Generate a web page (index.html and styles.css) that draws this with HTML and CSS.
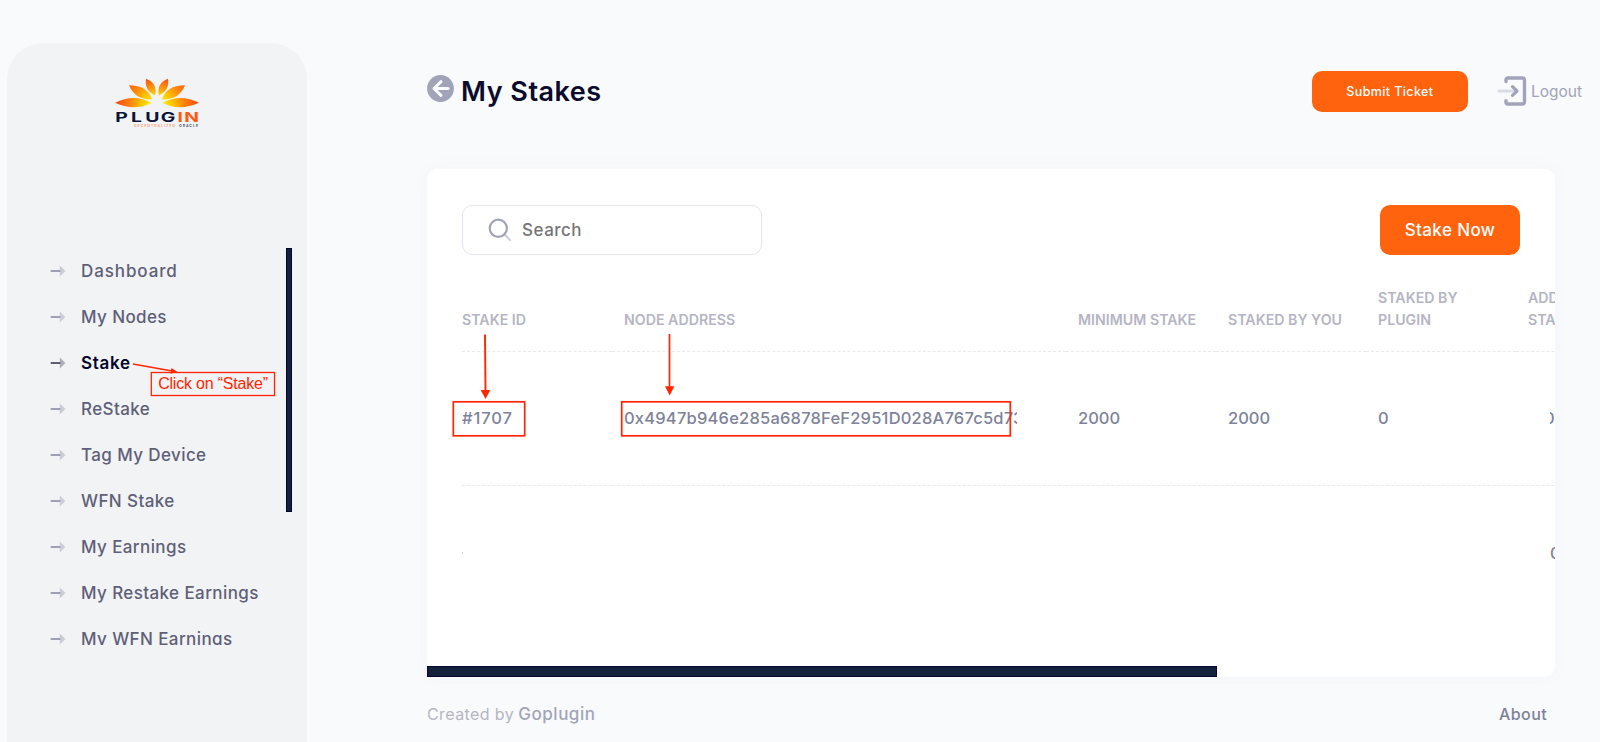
FILE: index.html
```html
<!DOCTYPE html>
<html lang="en">

<head>
    <meta charset="UTF-8">
    <meta name="viewport" content="width=device-width, initial-scale=1.0">
    <title>My Stakes</title>
    <link rel="stylesheet" href="styles.css">
</head>

<body>

    <!-- icons used more than once -->
    <svg width="0" height="0" class="defs">
        <symbol id="arrow" viewBox="0 0 16 12">
            <rect x="0.5" y="5.3" width="10" height="1.5" rx="0.7" fill="currentColor" />
            <path d="M9.8 0.5 L15.4 6 L9.8 11.5 Z" fill="currentColor" opacity="0.35" />
        </symbol>
    </svg>

    <aside class="sidebar">
        <svg class="logo" width="86" height="52" viewBox="0 0 86 52">
            <defs>
                <radialGradient id="flame" gradientUnits="userSpaceOnUse" cx="43" cy="30" r="40">
                    <stop offset="0.15" stop-color="#fff200" />
                    <stop offset="0.4" stop-color="#ffc400" />
                    <stop offset="0.7" stop-color="#fb8010" />
                    <stop offset="1" stop-color="#f9500f" />
                </radialGradient>
                <radialGradient id="flame-top" gradientUnits="userSpaceOnUse" cx="43" cy="30" r="29">
                    <stop offset="0.3" stop-color="#fff200" />
                    <stop offset="0.6" stop-color="#ffa80a" />
                    <stop offset="1" stop-color="#f9560f" />
                </radialGradient>
            </defs>
            <g fill="url(#flame)">
                <path d="M1 25.7 Q20 16 37.5 26 Q20 34.5 1 25.7 Z" />
                <path d="M15 8.3 Q34 8.5 38 22.5 Q21 23 15 8.3 Z" />
                <path d="M85 25.7 Q66 16 48.5 26 Q66 34.5 85 25.7 Z" />
                <path d="M71 8.3 Q52 8.5 48 22.5 Q65 23 71 8.3 Z" />
            </g>
            <g fill="url(#flame-top)">
                <path d="M32 1.8 Q44 6.5 41 18.5 Q30 13 32 1.8 Z" />
                <path d="M54 1.8 Q42 6.5 45 18.5 Q56 13 54 1.8 Z" />
            </g>
            <g class="logo-name" transform="scale(1.55 1)">
                <text x="0.8 11 20.2 30.2" y="45" fill="#0b1436">PLUG</text>
                <text x="41 45.3" y="45" fill="#ff5a12">IN</text>
            </g>
            <text class="logo-tag" x="20" y="50" textLength="41" fill="#f59a78">DECENTRALIZED</text>
            <text class="logo-tag" x="65" y="50" textLength="19" fill="#3c4360">ORACLE</text>
        </svg>

        <div class="menu-wrap">
            <nav class="menu">
                <a class="menu-link"><svg><use href="#arrow" /></svg><span>Dashboard</span></a>
                <a class="menu-link"><svg><use href="#arrow" /></svg><span>My Nodes</span></a>
                <a class="menu-link active"><svg><use href="#arrow" /></svg><span>Stake</span></a>
                <a class="menu-link"><svg><use href="#arrow" /></svg><span>ReStake</span></a>
                <a class="menu-link"><svg><use href="#arrow" /></svg><span>Tag My Device</span></a>
                <a class="menu-link"><svg><use href="#arrow" /></svg><span>WFN Stake</span></a>
                <a class="menu-link"><svg><use href="#arrow" /></svg><span>My Earnings</span></a>
                <a class="menu-link"><svg><use href="#arrow" /></svg><span>My Restake Earnings</span></a>
                <a class="menu-link"><svg><use href="#arrow" /></svg><span>My WFN Earnings</span></a>
            </nav>
            <div class="menu-scroll"></div>
        </div>
    </aside>

    <main class="main">

        <header class="topbar">
            <svg class="back" width="27" height="27" viewBox="0 0 27 27">
                <circle cx="13.5" cy="13.5" r="13.4" fill="#a1a3b9" />
                <path d="M14 6.7 L7 13.5 L14 20.3 M7.5 13.5 H21" fill="none" stroke="#fafbfd" stroke-width="3" stroke-linecap="round" stroke-linejoin="round" />
            </svg>
            <h1 class="title">My Stakes</h1>
            <button class="btn btn-ticket">Submit Ticket</button>
            <a class="logout">
                <svg width="30" height="30" viewBox="0 0 30 30" fill="none" stroke="#a1a3b9" stroke-linecap="round">
                    <path d="M2 15 H17" stroke-width="3" opacity="0.35" />
                    <path d="M15.5 10.7 L20 15 L15.5 19.3" stroke-width="3.2" stroke-linejoin="round" />
                    <path d="M9 5.5 V4 Q9 2 11 2 H25.5 Q27.5 2 27.5 4 V26 Q27.5 28 25.5 28 H11 Q9 28 9 26 V24.8" stroke-width="3.4" />
                </svg>
                <span>Logout</span>
            </a>
        </header>

        <section class="card">
            <div class="toolbar">
                <div class="search">
                    <svg width="24" height="24" viewBox="0 0 24 24" fill="none" stroke="#a1a5b7" stroke-linecap="round">
                        <path d="M17.5 17.5 L22 22" stroke-width="2.4" opacity="0.5" />
                        <circle cx="10.3" cy="10.3" r="8.6" stroke-width="2.2" />
                    </svg>
                    <span>Search</span>
                </div>
                <button class="btn btn-stake">Stake Now</button>
            </div>

            <table class="stakes">
                <colgroup>
                    <col class="col-id">
                    <col class="col-address">
                    <col class="col-num">
                    <col class="col-num">
                    <col class="col-num">
                    <col class="col-num">
                </colgroup>
                <tr>
                    <th>STAKE ID</th>
                    <th>NODE ADDRESS</th>
                    <th>MINIMUM STAKE</th>
                    <th>STAKED BY YOU</th>
                    <th>STAKED BY<br>PLUGIN</th>
                    <th>ADD<br>STAKE</th>
                </tr>
                <tr>
                    <td class="stake-id">#1707</td>
                    <td><div class="address">0x4947b946e285a6878FeF2951D028A767c5d73</div></td>
                    <td>2000</td>
                    <td>2000</td>
                    <td>0</td>
                    <td><div class="field field-cut"><span>0</span></div></td>
                </tr>
                <tr>
                    <td><div class="dot"></div></td>
                    <td></td>
                    <td></td>
                    <td></td>
                    <td></td>
                    <td><div class="field">0</div></td>
                </tr>
            </table>

            <div class="table-scroll"></div>
        </section>

        <footer class="footer">
            <p><span class="created">Created by</span> <span class="brand">Goplugin</span></p>
            <a class="about">About</a>
        </footer>

    </main>

    <!-- red notes drawn over the page -->
    <svg class="notes" width="1600" height="742" viewBox="0 0 1600 742" fill="none" stroke="#ff2600">
        <path d="M133 364 L172 371" stroke-width="1.3" />
        <path d="M171.5 368 L177.5 372 L170.5 373.8 Z" fill="#ff2600" stroke="none" />
        <path d="M485 334.5 L485.5 391" stroke-width="1.9" />
        <path d="M480.7 390 H490.3 L485.5 399 Z" fill="#ff2600" stroke="none" />
        <path d="M669.5 334 V387" stroke-width="1.7" />
        <path d="M665 386.3 H674.3 L669.7 395.5 Z" fill="#ff2600" stroke="none" />
        <rect x="453.3" y="401.8" width="71.4" height="34" stroke-width="1.7" />
        <rect x="621.7" y="401.8" width="388.6" height="34" stroke-width="1.7" />
        <rect x="151.3" y="372.5" width="123.2" height="23" stroke-width="1.3" />
    </svg>
    <div class="note-label">Click on “Stake”</div>

</body>

</html>
```

FILE: styles.css
```css
* {
    box-sizing: border-box;
}

body {
    margin: 0;
    width: 1600px;
    height: 742px;
    overflow: hidden;
    position: relative;
    display: flex;
    background-color: #f9fafc;
    font-family: Inter, "Noto Sans", sans-serif;
    font-weight: 500;
}

.defs {
    position: absolute;
}

/* sidebar */
.sidebar {
    width: 300px;
    height: 699px;
    margin: 43px 0 0 7px;
    border-radius: 36px 36px 0 0;
    background-color: #f2f3f5;
    flex-shrink: 0;
}

.logo {
    display: block;
    margin: 34px 0 0 107px;
}

.logo-name {
    font-size: 12.5px;
    font-weight: 700;
}

.logo-tag {
    font-size: 3.5px;
    font-weight: 600;
}

.menu-wrap {
    display: flex;
    justify-content: space-between;
    margin-top: 119px;
    padding: 0 15px 0 43px;
}

.menu {
    height: 397px;
    overflow: hidden;
}

.menu-link {
    display: flex;
    align-items: center;
    gap: 15px;
    height: 46px;
    font-size: 17px;
    letter-spacing: 0.4px;
    color: #5e6078;
    white-space: nowrap;
}

.menu-link svg {
    width: 16px;
    height: 12px;
    color: #8285a0;
}

.menu-link.active {
    color: #05062a;
    font-weight: 600;
    letter-spacing: 0.7px;
}

.menu-link.active svg {
    color: #2c2d48;
}

.menu-link:first-child {
    letter-spacing: 0.9px;
}

.menu-scroll {
    width: 6px;
    height: 264px;
    background-color: #14213d;
    border: 1px solid #04062b;
}

/* main area */
.main {
    width: 1128px;
    margin-left: 120px;
    flex-shrink: 0;
}

.topbar {
    display: flex;
    align-items: center;
    width: 1155px;
    height: 42px;
    margin-top: 70px;
}

.back {
    margin-top: -6px;
}

.title {
    margin: 0 auto 0 7px;
    padding-top: 1px;
    font-size: 27px;
    letter-spacing: 0.5px;
    font-weight: 600;
    color: #0b0b2b;
}

.btn {
    padding: 0;
    border: 0;
    border-radius: 10px;
    background-color: #ff630d;
    color: #fff;
    font-family: inherit;
    font-weight: 500;
}

.btn-ticket {
    width: 156px;
    height: 41px;
    font-size: 12.5px;
    letter-spacing: 0.4px;
}

.logout {
    display: flex;
    align-items: center;
    gap: 4px;
    margin-left: 29px;
    font-size: 15.5px;
    font-weight: 400;
    color: #a1a3b9;
}

.card {
    display: flex;
    flex-direction: column;
    height: 508px;
    margin-top: 57px;
    border-radius: 11px 11px 11px 0;
    background-color: #fff;
    box-shadow: 0 0 20px rgba(76, 87, 125, 0.03);
    overflow: hidden;
}

.toolbar {
    display: flex;
    justify-content: space-between;
    padding: 36px 35px 0 35px;
}

.search {
    display: flex;
    align-items: center;
    gap: 10px;
    width: 300px;
    height: 50px;
    padding-left: 25px;
    border: 1px solid #e3e3ee;
    border-radius: 10px;
    font-size: 17px;
    letter-spacing: 0.5px;
    color: #757575;
}

.btn-stake {
    width: 140px;
    height: 50px;
    font-size: 17px;
    letter-spacing: 0.4px;
}

.stakes {
    width: 1204px;
    margin: 25px 0 0 35px;
    table-layout: fixed;
    border-collapse: collapse;
}

.col-id {
    width: 150px;
}

.col-address {
    width: 454px;
}

.col-num {
    width: 150px;
}

.stakes th {
    height: 71px;
    padding: 0 0 20px 12px;
    vertical-align: bottom;
    text-align: left;
    font-size: 14.2px;
    line-height: 22px;
    font-weight: 600;
    color: #b5b5c3;
    border-bottom: 1px dashed #e8eaee;
    white-space: nowrap;
}

.stakes td {
    height: 134px;
    padding: 0 0 0 12px;
    font-size: 16.5px;
    color: #7e8299;
    border-bottom: 1px dashed #e8eaee;
}

.stakes th:first-child,
.stakes td:first-child {
    padding-left: 0;
}

.stakes tr:last-child td {
    padding-top: 2px;
    border-bottom: 0;
}

.stakes .stake-id {
    letter-spacing: 0.9px;
}

.address {
    width: 393px;
    overflow: hidden;
    white-space: nowrap;
    letter-spacing: 0.2px;
}

.field {
    padding-left: 22px;
}

/* the digit is scrolled half out of its field */
.field-cut span {
    display: block;
    width: 30px;
    overflow: hidden;
    text-indent: -6px;
}

.dot {
    width: 1px;
    height: 2px;
    background-color: #d5d5dc;
}

.table-scroll {
    width: 790px;
    height: 11px;
    margin-top: auto;
    flex-shrink: 0;
    background-color: #14213d;
    border: 1px solid #04062b;
}

.footer {
    display: flex;
    justify-content: space-between;
    align-items: center;
    height: 40px;
    margin-top: 17px;
    padding-right: 8px;
    font-size: 16px;
}

.footer p {
    margin: 0;
}

.created {
    color: #b5b5c3;
    font-weight: 400;
    letter-spacing: 0.4px;
}

.brand {
    color: #a1a5b7;
    font-size: 17px;
    letter-spacing: 0.5px;
}

.about {
    color: #7e8299;
    letter-spacing: 0.4px;
}

/* notes */
.notes {
    position: absolute;
    top: 0;
    left: 0;
}

.note-label {
    position: absolute;
    top: 373px;
    left: 151px;
    width: 124px;
    font: 16px/22px "Liberation Sans", Arial, sans-serif;
    letter-spacing: -0.2px;
    color: #ff2600;
    text-align: center;
    white-space: nowrap;
}
```
